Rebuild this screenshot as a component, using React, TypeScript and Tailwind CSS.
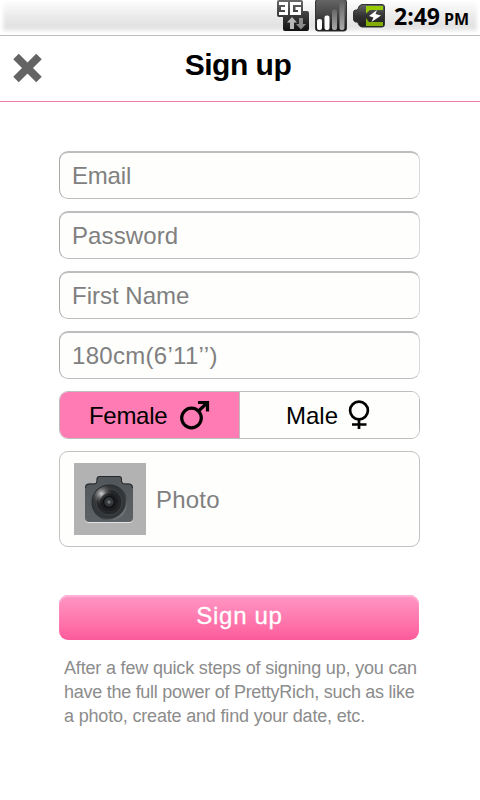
import React from "react";

function NetworkIcon() {
  return (
    <svg width="32" height="32" viewBox="0 0 32 32">
      <defs>
        <linearGradient id="net" x1="0" y1="0" x2="0" y2="1">
          <stop offset="0" stopColor="#6a6a6a" />
          <stop offset="0.5" stopColor="#3a3a3a" />
          <stop offset="1" stopColor="#111" />
        </linearGradient>
      </defs>
      <path d="M2 0H24Q26 0 26 2V11H30Q32 11 32 13V29Q32 31 30 31H8Q6 31 6 29V17H2Q0 17 0 15V2Q0 0 2 0Z" fill="url(#net)" />
      <path d="M2 3.500H9.500V13.500H2M4 8.500H9.500M24 3.500H14.500V13.500H22.500V8.500H18.500" fill="none" stroke="#fff" strokeWidth="3" />
      <path d="M15 17L20 22.5H17V29H13V22.5H10Z" fill="#b9b9b9" />
      <path d="M24 29.5L29 24H26V18H22V24H19Z" fill="#8b8b8b" />
    </svg>
  );
}

function SignalIcon() {
  return (
    <svg width="32" height="32" viewBox="0 0 32 32">
      <defs>
        <linearGradient id="sig" x1="0" y1="0" x2="0" y2="1">
          <stop offset="0" stopColor="#666" />
          <stop offset="0.5" stopColor="#444" />
          <stop offset="1" stopColor="#111" />
        </linearGradient>
        <linearGradient id="bar" x1="0" y1="0" x2="0" y2="1">
          <stop offset="0" stopColor="#666" />
          <stop offset="1" stopColor="#aaa" />
        </linearGradient>
      </defs>
      <rect x="0.5" y="-0.5" width="31" height="31.500" rx="2.5" fill="url(#sig)" stroke="#333" />
      <rect x="2" y="19" width="5" height="11" rx="2" fill="#fff" />
      <rect x="9.5" y="15.5" width="5" height="14.5" rx="2" fill="#fff" />
      <rect x="17" y="9.5" width="5" height="20.5" rx="2" fill="url(#bar)" />
      <rect x="24.5" y="2" width="5" height="28" rx="2" fill="url(#bar)" />
    </svg>
  );
}

function BatteryIcon() {
  return (
    <svg width="32" height="24" viewBox="0 0 32 24">
      <defs>
        <linearGradient id="bat" x1="0" y1="0" x2="0" y2="1">
          <stop offset="0" stopColor="#666" />
          <stop offset="0.5" stopColor="#333" />
          <stop offset="1" stopColor="#1c1c1c" />
        </linearGradient>
      </defs>
      <path d="M9 0.5H29Q31.5 0.5 31.5 3V20.500Q31.5 23 29 23H9Q6 23 4.500 18H2.500Q0.500 17.500 0.500 15V9Q0.500 6 2.500 6H4.500Q6 0.500 9 0.500Z" fill="url(#bat)" stroke="#333" />
      <path d="M13 2H30V6H17L13 9.500Z" fill="#96cc00" />
      <path d="M13 14L16 18H30V22H13Z" fill="#82ad05" />
      <path d="M24 6L16 12L20.500 13.500L18.500 18L28 11.500L22.500 10Z" fill="#fff" />
    </svg>
  );
}

function MarsIcon() {
  return (
    <svg width="30" height="30" viewBox="0 0 30 30" fill="none" stroke="#000" strokeWidth="3.200">
      <circle cx="11.500" cy="18" r="9.800" />
      <path d="M18.500 11L27 3M18 2.500H27.500V11.500" />
    </svg>
  );
}

function VenusIcon() {
  return (
    <svg width="22" height="30" viewBox="0 0 22 30" fill="none" stroke="#000" strokeWidth="2.700">
      <circle cx="11" cy="10.500" r="8.900" />
      <path d="M11 19V29M4 24.500H18.500" />
    </svg>
  );
}

function CameraIcon() {
  return (
    <svg width="50" height="50" viewBox="0 0 50 50">
      <defs>
        <linearGradient id="body" x1="0" y1="0" x2="0" y2="1">
          <stop offset="0" stopColor="#50565a" />
          <stop offset="1" stopColor="#5b6164" />
        </linearGradient>
        <linearGradient id="ring" x1="0" y1="0" x2="1" y2="1">
          <stop offset="0" stopColor="#171819" />
          <stop offset="0.600" stopColor="#3a3d40" />
          <stop offset="1" stopColor="#989b9c" />
        </linearGradient>
        <radialGradient id="shine" cx="0.270" cy="0.250" r="0.350">
          <stop offset="0" stopColor="#d4d4d4" />
          <stop offset="1" stopColor="#303234" stopOpacity="0" />
        </radialGradient>
      </defs>
      <path d="M4 9.500H10Q12.500 9.500 12.500 7V5Q12.500 2 15.500 2H35Q38 2 38 5V7Q38 9.500 40.500 9.500H45Q49 9.500 49 13.500V44Q49 48 45 48H5Q1 48 1 44V13.500Q1 9.500 4 9.500Z" fill="#e4e4e4" transform="translate(0 1)" />
      <path d="M4 9.500H10Q12.500 9.500 12.500 7V5Q12.500 2 15.500 2H35Q38 2 38 5V7Q38 9.500 40.500 9.500H45Q49 9.500 49 13.500V44Q49 48 45 48H5Q1 48 1 44V13.500Q1 9.500 4 9.500Z" fill="url(#body)" />
      <path d="M1.500 14Q1.500 10 5 10H10Q13 10 13 7V5Q13 2.500 15.500 2.500H35Q37.500 2.500 37.500 5V7Q37.500 10 40.500 10H45Q48.500 10 48.500 14" fill="none" stroke="#242729" strokeWidth="1" />
      <circle cx="25.500" cy="28.500" r="18" fill="url(#ring)" />
      <circle cx="25" cy="28" r="16.700" fill="#333638" />
      <circle cx="25" cy="28" r="13" fill="#242628" stroke="#414446" />
      <circle cx="25" cy="28" r="16.500" fill="url(#shine)" />
      <circle cx="25" cy="28" r="9" fill="#191a1c" opacity="0.700" />
      <circle cx="25" cy="28" r="5.500" fill="#34373a" stroke="#101112" strokeWidth="1.500" />
      <circle cx="25" cy="28" r="1.800" fill="#707374" />
    </svg>
  );
}

function Field({ label, tracking = "" }: { label: string; tracking?: string }) {
  return (
    <div className={`flex h-12 items-center rounded-[9px] border border-t-2 border-[#bdbdbd] border-r-[#d8d8d8] border-l-[#aaa] bg-[#fefefd] pl-3 text-2xl text-[#808080] ${tracking}`}>
      {label}
    </div>
  );
}

export default function App() {
  return (
    <div className="flex h-[800px] w-[480px] flex-col bg-white font-['Liberation_Sans',Arial,sans-serif] whitespace-nowrap">
      <div className="flex h-9 items-start border-b border-[#bdbdbd] bg-gradient-to-b from-white via-[#e9e9e9] via-50% to-[#dadada] pl-[277px] shadow-[inset_0_-5px_5px_#fff,inset_3px_0_4px_#fff,inset_-3px_0_4px_#fff]">
        <NetworkIcon />
        <div className="pl-1.5"><SignalIcon /></div>
        <div className="pt-1 pl-1.5"><BatteryIcon /></div>
        <div className="flex items-baseline pl-[9px] font-['Open_Sans','Noto_Sans',sans-serif] font-bold text-black">
          <span className="text-[23px] leading-8">2:49</span>
          <span className="pl-1 text-[16px]">PM</span>
        </div>
      </div>

      <header className="grid h-[66px] grid-cols-[60px_1fr_60px] items-center border-b border-[#f07fb0]">
        <svg className="ml-[13px]" width="29" height="29" viewBox="0 0 29 29" stroke="#646464" strokeWidth="7.800">
          <path d="M3 2.500L26 25.500M26 2.500L3 25.500" />
        </svg>
        <h1 className="pr-[4px] pb-[7px] text-center text-[30px] leading-8 font-bold tracking-[-0.5px] text-black">Sign up</h1>
      </header>

      <main className="flex flex-col gap-3 pt-[49px] pr-[60px] pl-[59px]">
        <Field label="Email" tracking="tracking-[-0.2px]" />
        <Field label="Password" tracking="tracking-[0.1px]" />
        <Field label="First Name" />
        <Field label="180cm(6’11’’)" tracking="tracking-[0.3px]" />
        <div className="flex h-12 overflow-hidden rounded-[9px] border border-[#bdbdbd] text-2xl text-black">
          <div className="flex w-[180px] items-center border-r border-[#bdbdbd] bg-[#ff7bb3] pl-[29px]">
            <span className="w-[79px] pt-px tracking-[-0.3px]">Female</span>
            <span className="ml-3"><MarsIcon /></span>
          </div>
          <div className="flex flex-1 items-center bg-[#fefefd] pl-[46px]">
            <span className="w-[52px] pt-px">Male</span>
            <span className="ml-[10px]"><VenusIcon /></span>
          </div>
        </div>
        <div className="flex h-24 items-center gap-[9px] rounded-[9px] border border-[#c2c2c2] bg-[#fefefd] pl-3.5 text-2xl text-[#808080]">
          <div className="flex size-[72px] items-center justify-center bg-[#b2b2b2] pr-[3px]">
            <CameraIcon />
          </div>
          <span className="pt-px pl-px tracking-[0.2px]">Photo</span>
        </div>
      </main>

      <section className="pt-12 pr-[61px] pl-[59px]">
        <button className="block h-[45px] w-full rounded-[9px] bg-gradient-to-b from-[#ff97c5] to-[#fc5a9b] pb-[3px] pl-px text-2xl tracking-[0.7px] text-white shadow-[inset_0_2px_1px_#ffb3d6] [-webkit-text-stroke:0.3px_white]">
          Sign up
        </button>
        <p className="pt-4 pl-[5px] text-[18px] leading-6 tracking-[-0.18px] text-[#8c8c8c]">
          After a few quick steps of signing up, you can<br />
          <span className="tracking-[-0.27px]">have the full power of PrettyRich, such as like</span><br />
          a photo, create and find your date, etc.
        </p>
      </section>
    </div>
  );
}
